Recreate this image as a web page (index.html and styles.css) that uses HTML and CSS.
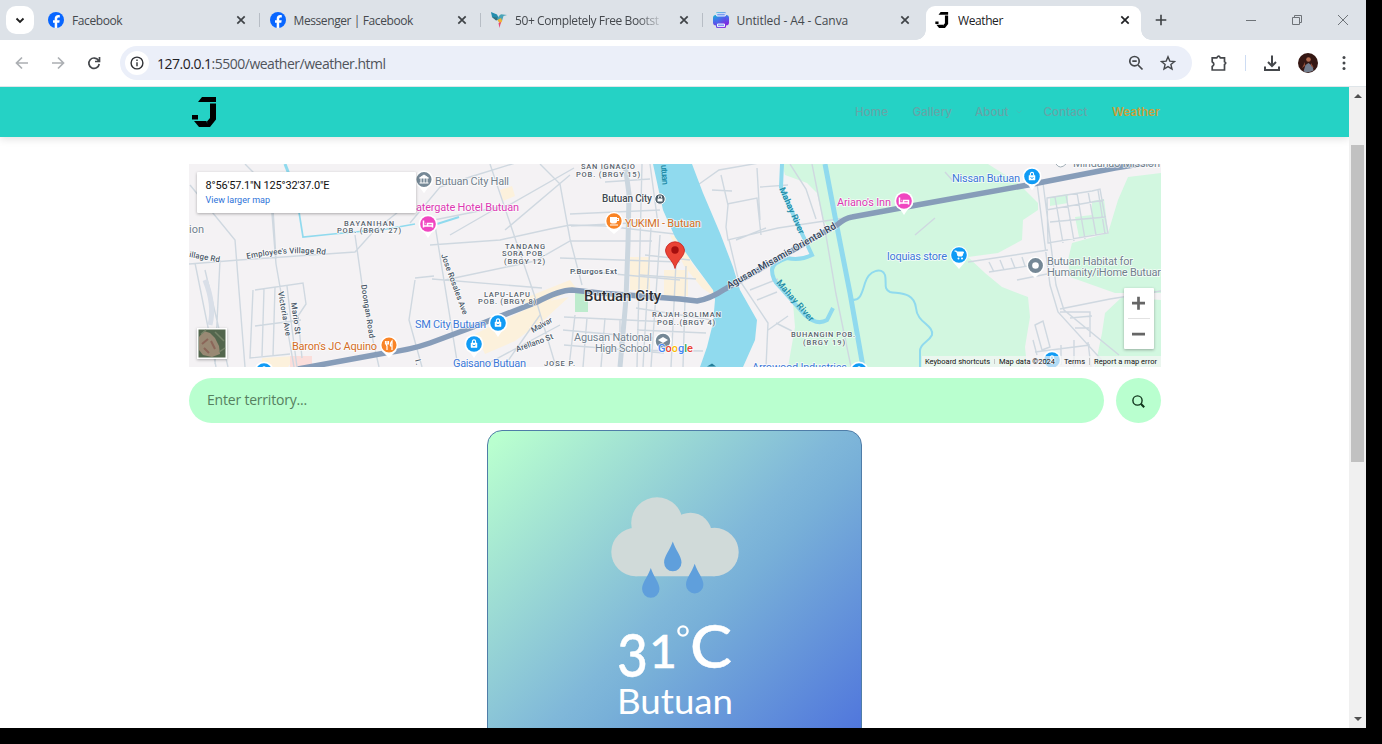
FILE: index.html
```
<!DOCTYPE html>
<html lang="en">
<head>
<meta charset="utf-8">
<title>Weather</title>
<link rel="stylesheet" href="styles.css">
</head>
<body>
<svg class="defs" width="0" height="0" aria-hidden="true">
  <defs>
    <symbol id="fb" viewBox="0 0 16 16"><circle cx="8" cy="8" r="8" fill="#0866ff"/><path d="M6.700 16v-5.300H5V8.300h1.700V7.100c0-2.700 1.200-4 3.800-4 .5 0 1 .1 1.300.2v2.100h-.9c-1.300 0-1.700.5-1.700 1.700v1.200h2.500l-.4 2.400H9.200V16z" fill="#fff"/></symbol>
    <symbol id="close" viewBox="0 0 10 10"><path d="M1.300 1.300l7.400 7.400M8.700 1.300L1.300 8.700" fill="none" stroke="currentColor" stroke-width="1.700"/></symbol>
    <symbol id="logo" viewBox="0 0 25 30"><path d="M10 0h14v5H6zM18 6.500h6V22.500l-6 7.500h-2.500l-.5-5.500 3-3.500zM0 18h6v4.500H0zM2 24h12.500l1.500 6H7z"/></symbol>
    <symbol id="bag" viewBox="0 0 20 24"><path d="M10 24L6 18h8z" fill="#fff"/><circle cx="10" cy="10" r="9.500" fill="#fff"/><circle cx="10" cy="10" r="7.800" fill="#109bf5"/><path d="M7 9h6v4.500H7z" fill="#fff" stroke="#fff" stroke-width=".5"/><path d="M8.400 9V7.500q0-1.600 1.600-1.600t1.600 1.600V9" fill="none" stroke="#fff" stroke-width="1.100"/><path d="M8.500 11q1.500 1.800 3 0" fill="none" stroke="#109bf5" stroke-width="1"/></symbol>
    <symbol id="bed" viewBox="0 0 20 24"><path d="M10 24L6 18h8z" fill="#fff"/><circle cx="10" cy="10" r="9.500" fill="#fff"/><circle cx="10" cy="10" r="7.800" fill="#f046c0"/><path d="M5.500 6.500v7M5.500 12h9v1.500M14.500 12V9.500H9.500V12M7.500 9.500h.5" fill="none" stroke="#fff" stroke-width="1.500"/></symbol>
  </defs>
</svg>
<div class="window">
  <header class="tabstrip">
    <div class="tabsearch"><svg width="10" height="7" viewBox="0 0 10 7"><path d="M1.500 1.500L5 5l3.500-3.500" fill="none" stroke="#1f1f1f" stroke-width="1.800"/></svg></div>
    <div class="tab"><svg class="fav"><use href="#fb"/></svg><span class="tab-title">Facebook</span><svg class="x"><use href="#close"/></svg></div>
    <div class="tab"><svg class="fav"><use href="#fb"/></svg><span class="tab-title">Messenger | Facebook</span><svg class="x"><use href="#close"/></svg></div>
    <div class="tab"><svg class="fav" viewBox="0 0 16 16"><path d="M0 0l6 2.500 2 4-3 1.500L1 5z" fill="#248dae"/><path d="M1 5l5 .5 2 2-3 1z" fill="#35707c"/><path d="M8 4q1.500-2.500 4-1.500l4 .5-3.500 1L11 9l-3 1-2-3z" fill="#4aa4b8"/><path d="M6.500 8l3.500-2 1.200 3-2 3z" fill="#f2b134"/><path d="M7.500 11l2.500-1-1.500 6z" fill="#e3477a"/></svg><span class="tab-title faded">50+ Completely Free Bootst</span><svg class="x"><use href="#close"/></svg></div>
    <div class="tab"><svg class="fav" viewBox="0 0 16 16"><defs><linearGradient id="cv" x1="0" x2=".5" y2="1"><stop stop-color="#16b5d3"/><stop offset=".5" stop-color="#466eec"/><stop offset="1" stop-color="#7d2be0"/></linearGradient></defs><rect x="0" y="3" width="16" height="10.500" rx="3" fill="url(#cv)"/><rect x="3" y="0" width="10" height="16" rx="1.500" fill="url(#cv)"/><path d="M3.700 1.200h8.600V4H3.700zM4.500 12h7v2.600h-7z" fill="#7d9df0" stroke="#fff" stroke-width=".9"/></svg><span class="tab-title wide">Untitled - A4 - Canva</span><svg class="x"><use href="#close"/></svg></div>
    <div class="tab active"><svg class="fav jfav"><use href="#logo"/></svg><span class="tab-title">Weather</span><svg class="x"><use href="#close"/></svg></div>
    <svg class="newtab" width="12" height="12" viewBox="0 0 12 12"><path d="M6 .7v10.600M.7 6h10.600" stroke="#3c4043" stroke-width="1.600"/></svg>
    <div class="winbtns">
      <svg width="12" height="12" viewBox="0 0 12 12"><path d="M1 6.500h10"/></svg>
      <svg width="12" height="12" viewBox="0 0 12 12"><path d="M1.500 3.500h7v7h-7zM3.500 3.500v-2h7v7h-2"/></svg>
      <svg width="12" height="12" viewBox="0 0 12 12"><path d="M1 1l10 10M11 1L1 11"/></svg>
    </div>
  </header>
  <div class="toolbar">
    <div class="navbtns">
      <svg width="14" height="14" viewBox="0 0 14 14" class="off"><path d="M13 7H2M7 1.500L1.500 7 7 12.500"/></svg>
      <svg width="14" height="14" viewBox="0 0 14 14" class="off"><path d="M1 7h11M7 1.500L12.500 7 7 12.500"/></svg>
      <svg width="14" height="14" viewBox="0 0 14 14"><path d="M11.500 4.500A5.200 5.200 0 1 0 12.200 8M12.500 1v4.500H8"/></svg>
    </div>
    <div class="omnibox">
      <div class="info"><svg width="14" height="14" viewBox="0 0 14 14"><circle cx="7" cy="7" r="5.900" fill="none" stroke="#303236" stroke-width="1.400"/><path d="M7 6.300v4M7 3.500v1.500" stroke="#303236" stroke-width="1.400"/></svg></div>
      <span class="url"><b>127.0.0.1</b>:5500/weather/weather.html</span>
      <svg width="16" height="16" viewBox="0 0 16 16" class="zoomout"><circle cx="6.500" cy="6.200" r="4.700"/><path d="M10 10l4.500 4.500M4.300 6.200h4.400"/></svg>
      <svg width="16" height="16" viewBox="0 0 16 16"><path stroke-width="1.400" d="M8 1.800l1.800 4.300 4.700.4-3.600 3 1.100 4.600-4-2.500-4 2.500 1.100-4.600-3.600-3 4.700-.4z"/></svg>
    </div>
    <svg class="ext" width="18" height="18" viewBox="0 0 18 18"><path d="M2.200 3.800h4.600Q8.800.6 10.300 3.800H14.500v4q2.500 1.200 0 2.700V16H2.200v-3.500q3.300-2.200 0-4.700z"/></svg>
    <i class="bar"></i>
    <svg class="dl" width="18" height="18" viewBox="0 0 18 18"><path d="M9 1.500v10M5 8l4 4 4-4M2 12.500V16h14v-3.500"/></svg>
    <svg class="avatar" width="20" height="20" viewBox="0 0 20 20"><circle cx="10" cy="10" r="10" fill="#351713"/><path d="M5.500 18.500l2-6.500 3-2 4 3 1 4.500q-5 3-10 1z" fill="#737d8d"/><circle cx="10.500" cy="6.500" r="2.300" fill="#b06b50"/><path d="M7 9l-3 6 3-2zM13 10l3 5-3-2z" fill="#8d4b37"/></svg>
    <svg class="dots" width="4" height="16" viewBox="0 0 4 16"><circle cx="2" cy="2.500" r="1.500"/><circle cx="2" cy="8" r="1.500"/><circle cx="2" cy="13.500" r="1.500"/></svg>
  </div>
  <div class="viewport">
    <div class="page">
      <nav class="site-nav">
        <svg class="site-logo" width="25" height="30"><use href="#logo"/></svg>
        <div class="links">
          <a>Home</a><a>Gallery</a><a class="drop">About <svg width="6" height="4" viewBox="0 0 6 4"><path d="M.5.5L3 3 5.500.5" fill="none" stroke="currentColor" opacity=".4"/></svg></a><a>Contact</a><a class="on">Weather</a>
        </div>
      </nav>
      <main>
        <svg class="map" width="972" height="203" viewBox="189 164 972 203">
          <rect x="189" y="164" width="972" height="203" fill="#f4f2f4"/>
          <g fill="#d2f7e0">
            <path d="M782 164H988L1018 183 1038 203V210L1023 220 1022 240 998 253 968 257 985 273 1002 287 1028 297 1030 317 1025 347 1027 367H788L795 327 793 303 773 280 772 270 785 257 813 257 805 240 828 227 823 220 817 193 807 183 785 175z"/>
            <path d="M1128 177L1161 173V293L1115 293 1070 277 1068 260 1072 243 1108 233 1118 200zM1122 297L1161 300V367H1095L1102 333 1105 313z"/>
            <path d="M1075 217l17-2v-14l12-2 4 33-29 5zM1050 197l18-3v9l-18 3z"/>
            <path d="M575 293h13v19h-13zM664 289h9v8h-9z" fill="#bdebcd"/>
          </g>
          <g fill="#fcf1dc">
            <path d="M475 334l64-31 30-6-24 22-30 22-30 13zM630 257h20v33h-20zM664 270h24v26h-24zM670 235l8 2 15 28 21 26v5l-12-8-18-22zM520 300l50-20 6 8-40 20zM262 358l34-2-8 11h-26zM500 190l12-4 3 10-12 5z"/>
            <path d="M290 356h22v11h-22z" fill="#fbdedb"/>
          </g>
          <g fill="none" stroke="#cfd8e0" stroke-width="1.400">
            <path d="M190 185l45 55 10 127M245 164l25 25 6 75 18 103M272 192l4 67M355 235l10 70 14 62M189 264l50-4 116-8 18-20 25-20M255 290l48-7 3 21-8 12 4 42M253 290l-3 68 40-4M255 326l46-6M264 289l-2 67M275 287l-2 69M287 286l4 35 6 46M195 263l21 104M205 270l23 97M220 260l-5 104M415 280l-6 40 13 47M415 278l19-2"/>
            <path d="M410 223l30-36 30-10 55-17M434 220l75-15 65-37M490 164l46 136 20 67M540 164l20 20 10 55 12 46M435 225l23 142M430 245l70-5 50-11 20-4 35 1 70 8M445 280l90-19 35-20h82M505 230l65-55M450 235l52-30M432 279l110 9M570 214l90-4M571 226l80-4M560 258l120 4M570 270l110 10M540 315l-35 50M560 325l-75 40"/>
            <path d="M600 170l20-6M605 182l45-3M650 164l8 60M642 164l-5 203M651 228l-8 139M660 235l-9 132M676 262l-5 105M686 266l-3 101M563 330l90 8M564 345l100 8M564 317l105 5M575 315l-6 52M587 318l-4 49M605 318l-4 49M620 320v47M645 255l45 5M640 275l56 4M636 308l76 12M637 330l69 3M635 350l68 1"/>
            <path d="M695 187l24-17 40-7M721 175l7 30-2 22 2 13 50-12 60-9 80-12M727 204l30-6 4 37M757 168l3 52M760 187l28-2M712 190l20 1M729 240l9 38 30 45-2 44M745 278l25-13M750 290l28-11M757 300l20-8M768 330l20-14M776 323l16 8M790 164l16 25 10 30M812 164l12 60 12 70 15 73M736 240l30-12"/>
            <path d="M1037 183l13 102 8 27 50 55M1043 183l13 102 8 25 55 45M1060 309l50-10 51-8M1047 198l45-7 8-2 8 44-60 10zM1055 197l8 46M1066 195l8 46M1077 193l8 46M1088 191l8 44M1098 190l7 44M1050 222l56-5M1046 210l58-10M968 262l80-12M989 262l5 10M1000 260l4 10M1011 258l4 10M1022 257l3 9M989 272l52-8M1017 280l30-6M1060 312h30v25M1070 318l22-2M1075 328h14M1035 325l8-4 7 26-8 3zM1033 340l4 15M1035 352l55-7M1061 345v20M1074 340v27M1088 342l3 25M945 172l8 9M915 235l20-17"/>
          </g>
          <path d="M625 164l4 30-1 50-2 55-6 68" fill="none" stroke="#cbd6df" stroke-width="5"/>
          <path d="M205 280q10 25 5 45" fill="none" stroke="#d9dfe8" stroke-width="5"/>
          <g fill="none" stroke="#90daee">
            <path d="M285 164l7 18" stroke-width="3"/><path d="M299 212l4 25 30-3 54-5 28-5" stroke-width="1.700"/><path d="M437 224l22-7" stroke-width="2"/>
            <path d="M825 164L837 227 850 293 863 367" stroke-width="5"/>
            <path d="M782 164L781 187 797 223 812 255Q800 261 787 258 772 263 772 270 772 280 780 287L805 315Q817 326 827 320L833 308" stroke-width="4"/>
            <path d="M850 299C860 303 862 293 865 283C869 270 882 267 885 275C887 283 883 289 890 292C900 294 914 292 916 308C917 323 934 325 932 335C928 343 920 343 920 351V367" stroke-width="2"/>
          </g>
          <path d="M653 164L663 210 675 237 693 263 713 290 715 300 713 323 707 347 700 367H743L755 340 757 320 740 290 733 267 720 233 703 193 692 164z" fill="#90daee"/>
          <path d="M298 369L385 353 Q410 350 430 343L473 327 537 302Q560 290 572 290L600 293 680 299 697 301Q710 299 725 289L837 225Q845 218 852 217L917 205 1028 185 1115 168 1165 160" fill="none" stroke="#879db9" stroke-width="5.500"/>
          <g class="poi gray">
            <text x="435" y="184.500" textLength="74">Butuan City Hall</text><text x="189" y="233" textLength="15">ion</text>
            <text x="574" y="341" textLength="78">Agusan National</text><text x="595" y="351.500" textLength="56">High School</text>
            <text x="1047" y="265" textLength="86">Butuan Habitat for</text><text x="1047" y="276" textLength="114">Humanity/iHome Butuar</text>
            <text x="1073" y="167" textLength="87">Mindanao Mission</text>
          </g>
          <g class="poi pink"><text x="416" y="211" textLength="103">atergate Hotel Butuan</text><text x="837" y="206" textLength="54">Ariano's Inn</text></g>
          <g class="poi orange"><text x="625" y="226.500" textLength="76">YUKIMI - Butuan</text><text x="292" y="350" textLength="85">Baron's JC Aquino</text></g>
          <g class="poi blue"><text x="415" y="327.500" textLength="71">SM City Butuan</text><text x="453" y="366.500" textLength="73">Gaisano Butuan</text><text x="952" y="181.500" textLength="68">Nissan Butuan</text><text x="887" y="260" textLength="60">loquias store</text><text x="752" y="370.500" textLength="95">Arrowood Industries</text></g>
          <g class="area">
            <text x="344" y="225.500" textLength="50">BAYANIHAN</text><text x="337" y="233" textLength="64">POB. (BRGY 27)</text>
            <text x="581" y="169" textLength="54">SAN IGNACIO</text><text x="576" y="176.500" textLength="64">POB. (BRGY 15)</text>
            <text x="505" y="248.500" textLength="40">TANDANG</text><text x="502" y="256" textLength="43">SORA POB.</text><text x="504" y="263.500" textLength="41">(BRGY 12)</text>
            <text x="484" y="296.500" textLength="46">LAPU-LAPU</text><text x="478" y="304" textLength="58">POB. (BRGY 8)</text>
            <text x="652" y="317" textLength="69">RAJAH SOLIMAN</text><text x="657" y="324.500" textLength="58">POB..(BRGY 4)</text>
            <text x="791" y="337" textLength="64">BUHANGIN POB.</text><text x="803" y="345" textLength="42">(BRGY 19)</text><text x="544" y="366" textLength="31">JOSE P.</text>
          </g>
          <g class="road">
            <text transform="translate(189 257) rotate(10)" textLength="31">illage Rd</text>
            <path id="evr" d="M247 259Q290 250 327 255" fill="none" stroke="none"/><text textLength="79"><textPath href="#evr" textLength="79">Employee's Village Rd</textPath></text>
            <text transform="translate(278 292) rotate(80)" textLength="45">Victoria Ave</text><text transform="translate(291 303) rotate(82)" textLength="32">Mario St</text>
            <text transform="translate(361 285) rotate(81)" textLength="54">Doongan Road</text><text transform="translate(441 255) rotate(70)" textLength="64">Jose Rosales Ave</text>
            <text transform="translate(415 360) rotate(75)" textLength="18">I. Bl</text>
            <text x="570" y="274" textLength="47">P.Burgos Ext</text><text transform="translate(533 333) rotate(-30)" textLength="23">Malvar</text><text transform="translate(517 352) rotate(-20)" textLength="39">Arellano St</text>
            <text class="big" transform="translate(729 289) rotate(-29.500)" textLength="124">Agusan-Misamis Oriental Rd</text>
          </g>
          <g class="water"><text transform="translate(779 189) rotate(66)" textLength="50">Mahay River</text><text transform="translate(776 283) rotate(49)" textLength="52">Mahay River</text><text transform="translate(661 165) rotate(86)" textLength="20">utuan</text></g>
          <text class="city-sm" x="602" y="202" textLength="50">Butuan City</text>
          <text class="city" x="584" y="301" textLength="77" lengthAdjust="spacingAndGlyphs">Butuan City</text>
          <g stroke="#fff" stroke-width="1.500"><path d="M419 185l5 7 5-7z" fill="#fff"/><circle cx="424" cy="179.500" r="8.300" fill="#758896"/><circle cx="663" cy="341" r="8" fill="#758896"/><path d="M1031 273l4 4 4-4z" fill="#fff"/><circle cx="1035.500" cy="265.500" r="8.200" fill="#758896"/><path d="M608 228l6 5 6-5z" fill="#fff"/><circle cx="614" cy="221" r="8.400" fill="#f98426"/><path d="M383 351l6 6 6-6z" fill="#fff"/><circle cx="389" cy="345" r="8.300" fill="#f98426"/></g>
          <path d="M419.500 178l4.500-3 4.500 3zM419.500 183h9M421 178v5M424 178v5M427 178v5" fill="#fff" stroke="#fff"/>
          <circle cx="1035.500" cy="265.500" r="3.300" fill="#fff"/><path d="M658 340l5-3 5 3-5 3z" fill="#fff"/>
          <path d="M616.500 218.500h2v2h-2M610 225h8M387 341v3q-1 1 0 2v4M385.500 341v3h3v-3M392 350v-9q-2 2-1.500 5h1.500" fill="none" stroke="#fff" stroke-width="1.200"/><path d="M610 217h7v4.500q0 2-2 2h-3q-2 0-2-2z" fill="#fff"/>
          <circle cx="660" cy="199" r="5.200" fill="#4d5d69" stroke="#fff"/><path d="M657.500 198.500h5v3h-5z" fill="#fff"/><path d="M658.500 198v-2h3v2" fill="none" stroke="#fff" stroke-width=".8"/>
          <use href="#bed" x="418" y="214" width="20" height="24"/><use href="#bed" x="894" y="191" width="20" height="24"/>
          <use href="#bag" x="488" y="313" width="20" height="24"/><use href="#bag" x="464" y="334" width="20" height="24"/><use href="#bag" x="1022" y="166.500" width="20" height="24"/>
          <use href="#bag" x="254" y="361" width="20" height="24"/><use href="#bag" x="849" y="361" width="20" height="24"/><use href="#bag" x="1042" y="350" width="20" height="24"/>
          <path d="M953 262l6 7 6-7z" fill="#fff"/><circle cx="959" cy="255" r="9" fill="#fff"/><circle cx="959" cy="255" r="7.800" fill="#109bf5"/><path d="M954.500 251h2l1.500 5h4l1.500-4H957" fill="#fff" stroke="#fff"/><circle cx="958.500" cy="258.500" r="1" fill="#fff"/><circle cx="962" cy="258.500" r="1" fill="#fff"/>
          <path d="M1056 164q4 6 10 0" fill="#fff" stroke="#a2aeb7"/><path d="M707 366.500l5-3 4 3z" fill="#247d98"/>
          <path d="M675 268.500C673 260 665.500 257 665.500 250A9.600 9.600 0 0 1 684.500 250C684.500 257 677 260 675 268.500z" fill="#ea4335" stroke="#c5221f" stroke-width=".8"/><circle cx="675" cy="250" r="3.700" fill="#a50e0e"/>
          <text class="google" x="658" y="351.500" textLength="35"><tspan fill="#4285f4">G</tspan><tspan fill="#ea4335">o</tspan><tspan fill="#fbbc04">o</tspan><tspan fill="#4285f4">g</tspan><tspan fill="#34a853">l</tspan><tspan fill="#ea4335">e</tspan></text>
          <g class="infobox"><rect x="197" y="172" width="219" height="41" rx="1" fill="#fff"/></g>
          <text class="coords" x="205.500" y="189" textLength="124">8°56'57.1"N 125°32'37.0"E</text><text class="larger" x="205.500" y="203" textLength="64.500">View larger map</text>
          <g class="infobox"><rect x="197" y="328" width="30" height="31" fill="#fff"/><rect x="198.500" y="329.500" width="27" height="28" fill="#53664d"/></g>
          <path d="M199 337l5-6 6 2 5 5 4 8 1 8-8 3-9-2-4-5z" fill="#998974"/><path d="M202 344l6-5M204 348l5 5M211 341l4 8" fill="none" stroke="#8b6659" stroke-width="2"/><path d="M215 332l9 9M201 334l5-4M219 352l6-4" fill="none" stroke="#768469" stroke-width="1.500"/>
          <rect x="922" y="356" width="239" height="11" fill="#f5f5f5" opacity=".7"/>
          <g class="attrib"><text x="925" y="364" textLength="65">Keyboard shortcuts</text><path d="M994.500 359v5M1089.500 358v7" stroke="#aaa" stroke-width=".6"/><text x="999" y="364" textLength="56">Map data ©2024</text><text x="1064" y="364" textLength="21">Terms</text><text x="1094" y="364" textLength="63">Report a map error</text></g>
          <g class="infobox"><rect x="1124" y="288" width="30" height="61" rx="1" fill="#fff"/></g>
          <path d="M1128 318.500h22" stroke="#e2e2e2"/><path d="M1132 303.200h13M1138.500 296.700v13M1132 334.200h13" stroke="#666" stroke-width="2.700"/>
        </svg>
        <div class="search"><div class="field">Enter territory...</div><div class="go"><svg width="13" height="13" viewBox="0 0 13 13"><circle cx="5.500" cy="5.500" r="4.600" fill="none" stroke="#10351c" stroke-width="1.400"/><path d="M8.800 8.800l3.400 3.400" stroke="#10351c" stroke-width="2.100"/></svg></div></div>
        <section class="card">
          <svg class="rain" width="128" height="103" viewBox="610.500 496 128 103"><g fill="#d0dad9"><circle cx="656.500" cy="523" r="25.800"/><circle cx="690" cy="534" r="21.300"/><circle cx="714" cy="552" r="24.200"/><circle cx="635" cy="552" r="24.200"/><path d="M635 528h79v48.200h-79z"/></g><g fill="#5f9fdc"><path id="drop" d="M672.300 541.500C675 550 681 556 681 562.500A8.700 8.700 0 0 1 663.600 562.500C663.600 556 669.500 550 672.300 541.500z"/><use href="#drop" x="-22" y="26.500"/><use href="#drop" x="21.900" y="22.200"/></g></svg>
          <svg class="reading" width="128" height="115" viewBox="611 610 128 115">
            <text x="617" y="677" font-size="60" textLength="31" lengthAdjust="spacingAndGlyphs">3</text>
            <text x="649" y="668" font-size="47" textLength="28" lengthAdjust="spacingAndGlyphs">1</text>
            <circle cx="683" cy="631" r="4.600" fill="none" stroke="#fff" stroke-width="2.400"/>
            <text x="690" y="668" font-size="60" textLength="42" lengthAdjust="spacingAndGlyphs">C</text>
            <text class="place" x="617" y="714" font-size="34" textLength="116" lengthAdjust="spacingAndGlyphs">Butuan</text>
          </svg>
        </section>
      </main>
    </div>
    <div class="scroll"><i class="up"></i><div class="thumb"></div><i class="down"></i></div>
  </div>
</div>
</body>
</html>
```
FILE: styles.css
```
* { box-sizing: border-box; }
body { margin: 0; width: 1382px; height: 744px; overflow: hidden; background: #000; font-family: "Open Sans", sans-serif; }
.defs { position: absolute; }
svg { flex: none; display: block; }
.window { width: 1366px; height: 728px; background: #fff; overflow: hidden; display: flex; flex-direction: column; }

.tabstrip { height: 40px; flex: none; background: #dde2e8; display: flex; align-items: center; padding-left: 6px; }
.tabsearch { width: 28px; height: 28px; border-radius: 10px; background: #fff; display: flex; align-items: center; justify-content: center; margin-right: 4px; }
.tab { width: 221.500px; height: 40px; display: flex; align-items: center; padding: 0 14px 0 10px; color: #45494e; position: relative; }
.tab + .tab::before { content: ""; position: absolute; left: -1px; top: 13px; width: 1px; height: 14px; background: #b7bdc5; }
.fav { width: 16px; height: 16px; margin-right: 8px; }
.tab-title { font-size: 12px; letter-spacing: -.4px; flex: 1; min-width: 0; white-space: nowrap; overflow: hidden; }
.wide { letter-spacing: -.1px; }
.x { width: 10px; height: 10px; margin-left: 14px; color: #3f4347; }
.faded { -webkit-mask-image: linear-gradient(90deg, #000 82%, transparent); mask-image: linear-gradient(90deg, #000 82%, transparent); }
.tabstrip .active { width: 215px; height: 34px; margin-top: 6px; margin-left: 2px; padding: 0 11px 6px 8px; background: #fff; border-radius: 9px 9px 0 0; color: #202124; }
.tabstrip .active::before { left: -10px; top: 24px; width: 10px; height: 10px; background: radial-gradient(circle at 0 0, transparent 9.500px, #fff 10px); }
.active::after { content: ""; position: absolute; right: -10px; top: 24px; width: 10px; height: 10px; background: radial-gradient(circle at 100% 0, transparent 9.500px, #fff 10px); }
.active .x { color: #202124; }
.newtab { margin-left: 14px; }
.winbtns { margin-left: auto; display: flex; gap: 34px; padding-right: 17px; fill: none; stroke: #6e7378; }

.toolbar { height: 46px; flex: none; display: flex; align-items: center; background: #fff; fill: none; stroke: #44474b; stroke-width: 1.700; }
.navbtns { display: flex; gap: 22px; padding-left: 15px; width: 120px; flex: none; }
.off { stroke: #acafb3; }
.omnibox { width: 1072px; height: 34px; flex: none; border-radius: 17px; background: #ebeff9; display: flex; align-items: center; padding: 0 16px 0 5px; }
.info { width: 24px; height: 24px; border-radius: 50%; background: #fff; display: flex; align-items: center; justify-content: center; }
.url { font-size: 14px; letter-spacing: -.5px; color: #50545b; margin-left: 8px; flex: 1; }
.url b { font-weight: 400; color: #1f2024; }
.zoomout { margin-right: 16px; }
.ext { margin-left: 18px; }
.bar { width: 1px; height: 16px; background: #cddcf3; margin-left: 17px; }
.dl { margin-left: 17px; stroke-width: 2; }
.avatar { margin-left: 17px; stroke: none; }
.dots { margin-left: 24px; fill: #44474b; stroke: none; }

.viewport { flex: 1; min-height: 0; display: flex; border-top: 1px solid #dfe5e9; }
.page { width: 1349px; overflow: hidden; }
.site-nav { height: 50px; background: #25d2c5; padding: 0 189px 0 192px; display: flex; align-items: center; justify-content: space-between; box-shadow: 0 2px 8px rgba(0,0,0,.12); }
.links { display: flex; gap: 22.500px; font: 500 11.700px "Inter", sans-serif; color: #64a6a8; height: 16px; line-height: 17px; position: relative; left: 1px; }
.links a { width: 35px; white-space: nowrap; }
.links a:nth-child(2) { width: 40px; }
.links a:nth-child(3) { width: 46px; }
.links a:nth-child(4) { width: 46px; }
.links .on { width: 49px; color: #caa03b; font-weight: 600; }
.drop { display: flex; align-items: center; gap: 7px; }
main { padding: 27px 188px 0 189px; }
.map { overflow: hidden; }
.map text { font-family: Roboto, sans-serif; paint-order: stroke; stroke: #fff; stroke-width: 1.500px; stroke-opacity: .8; }
.poi text { font-size: 11px; }
.gray { fill: #71808d; }
.pink { fill: #dc38b3; }
.orange { fill: #d36d24; }
.blue { fill: #3c78d8; }
.area text { font-size: 7.500px; fill: #59636d; font-weight: 500; }
.road text { font-size: 8px; fill: #4b5968; font-weight: 500; }
.road .big { font-size: 9.800px; fill: #33445a; }
.water text { font-size: 9px; fill: #218ba7; font-weight: 500; stroke: none; }
.map .city-sm { font-size: 10px; fill: #414a52; font-weight: 500; }
.map .city { font-size: 14.500px; fill: #2b2e32; font-weight: 500; }
.map .google { font-size: 11px; font-weight: 500; }
.map .coords { font-size: 11px; fill: #111; font-weight: 400; stroke: none; }
.map .larger { font-size: 9px; fill: #2d72d9; stroke: none; }
.attrib text { font-size: 7.500px; fill: #111; stroke: none; }
.infobox { filter: drop-shadow(0 1px 1.500px rgba(0,0,0,.3)); }
.search { display: flex; gap: 12px; margin-top: 11px; height: 45px; }
.field { width: 915px; border-radius: 23px; background: #b9ffcf; padding: 0 18px; line-height: 43px; font-size: 14px; letter-spacing: -.2px; color: #56805f; }
.go { width: 45px; border-radius: 50%; background: #b9ffcf; display: flex; align-items: center; justify-content: center; padding-right: 1px; padding-top: 1px; }
.card { width: 375px; height: 469px; margin: 7px 0 0 298px; border: 1px solid #4f7da8; border-radius: 15px; background: linear-gradient(135deg, #b9ffcf 2%, #80b8d9 42%, #78b0d8 48%, #4b6fdd 84%); display: flex; flex-direction: column; align-items: center; padding-top: 65px; }
.reading { margin-top: 11px; overflow: visible; font-family: Lato, sans-serif; font-weight: 500; fill: #fff; stroke: #fff; stroke-width: .4px; }
.reading .place { font-weight: 400; stroke: none; }
.scroll { width: 17px; background: #f0f0f0; display: flex; flex-direction: column; align-items: center; padding: 7px 0; }
.up, .down { border: 4px solid transparent; border-top: 0; border-bottom: 4px solid #505050; }
.thumb { width: 13px; height: 317px; margin-top: 47px; background: #c1c1c1; }
.down { border-bottom: 0; border-top: 4px solid #505050; margin-top: auto; }
```
